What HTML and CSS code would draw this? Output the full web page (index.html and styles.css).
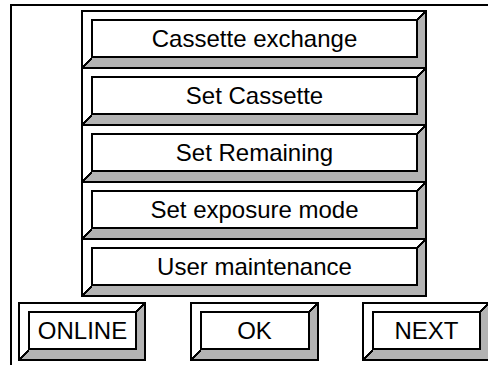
FILE: index.html
```html
<!DOCTYPE html>
<html lang="en">
<head>
  <meta charset="UTF-8">
  <title>Menu</title>
  <link rel="stylesheet" href="styles.css">
</head>
<body>
  <div class="panel">
    <div class="menu">
      <div class="btn wide"><div class="bevel"><div class="face">Cassette exchange</div></div></div>
      <div class="btn wide"><div class="bevel"><div class="face">Set Cassette</div></div></div>
      <div class="btn wide"><div class="bevel"><div class="face">Set Remaining</div></div></div>
      <div class="btn wide"><div class="bevel"><div class="face">Set exposure mode</div></div></div>
      <div class="btn wide"><div class="bevel"><div class="face">User maintenance</div></div></div>
    </div>
    <div class="actions">
      <div class="btn small"><div class="bevel"><div class="face">ONLINE</div></div></div>
      <div class="btn small ok"><div class="bevel"><div class="face">OK</div></div></div>
      <div class="btn small"><div class="bevel"><div class="face">NEXT</div></div></div>
    </div>
  </div>
</body>
</html>
```

FILE: styles.css
```css
html, body { margin: 0; overflow: hidden; background: #fff; }
body { font-family: "Liberation Sans", Arial, sans-serif; color: #000; }

.panel { margin: 4px 0 0 10px; border-top: 2px solid #000; border-left: 2px solid #000; height: 359px; width: 476px; }

.menu { padding: 4px 0 0 69px; display: flex; flex-direction: column; }
.actions { display: flex; justify-content: space-between; width: 472px; margin: 7px 0 0 6px; }

.btn { border: 2px solid #000; box-sizing: border-box; height: 59px; background: #fff; flex-shrink: 0; }
.btn.wide { width: 346px; margin-bottom: -2px; }
.btn.small { width: 128px; }
.btn.small.ok { width: 129px; }

.bevel { position: relative; height: 100%; box-sizing: border-box; border-style: solid; border-width: 7px 7px 9px 8px; border-color: #fff #b3b3b3 #b3b3b3 #fff; }
.bevel::before, .bevel::after { content: ""; position: absolute; width: 9px; height: 9px; background: linear-gradient(to bottom right, transparent calc(50% - 1px), #000 calc(50% - 1px), #000 calc(50% + 1px), transparent calc(50% + 1px)); }
.bevel::before { top: -7px; right: -7px; }
.bevel::after { bottom: -9px; left: -8px; }

.face { height: 100%; box-sizing: border-box; border: 2px solid #000; background: #fff; display: flex; align-items: center; justify-content: center; font-size: 24px; }
```
